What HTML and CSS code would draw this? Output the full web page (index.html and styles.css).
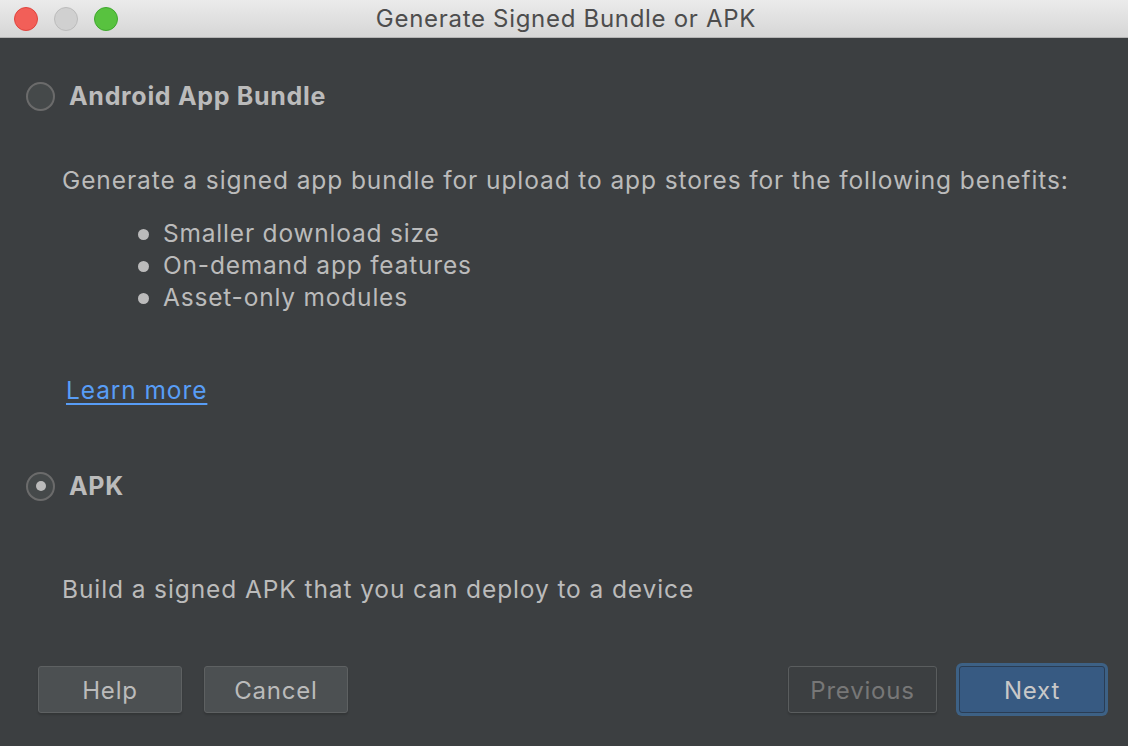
FILE: index.html
```html
<!DOCTYPE html>
<html>
<head>
<meta charset="utf-8">
<link rel="stylesheet" href="styles.css">
</head>
<body>
<div class="window">
  <div class="titlebar">
    <div class="lights">
      <span class="light red"></span>
      <span class="light gray"></span>
      <span class="light green"></span>
    </div>
    <div class="title">Generate Signed Bundle or APK</div>
  </div>
  <div class="content">
    <div class="option">
      <span class="radio"></span>
      <span class="opt-label">Android App Bundle</span>
    </div>
    <p class="desc first">Generate a signed app bundle for upload to app stores for the following benefits:</p>
    <ul class="benefits">
      <li>Smaller download size</li>
      <li>On-demand app features</li>
      <li>Asset-only modules</li>
    </ul>
    <a class="learn" href="#">Learn more</a>
    <div class="option apk">
      <span class="radio checked"></span>
      <span class="opt-label">APK</span>
    </div>
    <p class="desc second">Build a signed APK that you can deploy to a device</p>
  </div>
  <div class="footer">
    <div class="group">
      <button class="btn">Help</button>
      <button class="btn">Cancel</button>
    </div>
    <div class="group right">
      <button class="btn disabled">Previous</button>
      <button class="btn primary">Next</button>
    </div>
  </div>
</div>
</body>
</html>
```

FILE: styles.css
```css
* { box-sizing: border-box; }
html, body { margin: 0; padding: 0; }
body {
  width: 1128px;
  height: 746px;
  overflow: hidden;
  background: #3c3f41;
  font-family: "Inter", "Liberation Sans", sans-serif;
  color: #bbbbbb;
}
.window { width: 1128px; height: 746px; display: flex; flex-direction: column; }
.titlebar {
  height: 38px;
  background: linear-gradient(#ebebeb, #d6d6d6);
  border-bottom: 1px solid #b4b4b4;
  display: flex;
  align-items: center;
  position: relative;
}
.lights { display: flex; gap: 16px; padding-left: 14px; position: relative; z-index: 1; }
.light { width: 24px; height: 24px; border-radius: 50%; display: block; }
.red { background: #f25f58; border: 1px solid #e0443e; }
.gray { background: #d0d0d0; border: 1px solid #bcbcbc; }
.green { background: #58c23f; border: 1px solid #3fa82e; }
.title {
  position: absolute;
  left: 0; right: 0; top: 0; bottom: 0;
  display: flex; align-items: center; justify-content: center;
  font-size: 24px;
  letter-spacing: 0.7px;
  color: #4d4d4d;
  padding-left: 4px;
}
.content { flex: 1; padding: 44px 0 0 0; }
.option { display: flex; align-items: center; height: 28px; padding-left: 26px; }
.radio {
  width: 29px; height: 29px; border-radius: 50%;
  border: 2px solid #6b6b6b;
  background: #45494a;
  display: flex; align-items: center; justify-content: center;
  margin-right: 14px;
}
.radio.checked::after {
  content: ""; width: 10px; height: 10px; border-radius: 50%; background: #bbbbbb;
}
.opt-label { font-size: 25px; font-weight: 700; color: #bbbbbb; letter-spacing: 0.7px; }
.desc { margin: 0; font-size: 24.5px; letter-spacing: 0.9px; padding-left: 62px; }
.desc.first { margin-top: 55px; }
.benefits {
  margin: 22px 0 0 0;
  padding-left: 163px;
  font-size: 24.5px;
  letter-spacing: 0.8px;
  line-height: 32px;
  list-style: none;
}
.benefits li { position: relative; }
.benefits li::before {
  content: ""; position: absolute; left: -25px; top: 12px;
  width: 11px; height: 11px; border-radius: 50%; background: #bbbbbb;
}
.learn {
  display: inline-block;
  margin: 62px 0 0 66px;
  font-size: 24.5px;
  letter-spacing: 0.9px;
  color: #589df6;
  text-decoration: underline;
  text-underline-offset: 4px;
}
.option.apk { margin-top: 67px; }
.desc.second { margin-top: 74px; }
.footer {
  height: 116px;
  display: flex;
  justify-content: space-between;
  padding: 36px 23px 0 38px;
}
.group { display: flex; gap: 22px; align-items: flex-start; }
.group.right { gap: 22px; }
.btn {
  width: 144px; height: 47px;
  background: #4c5052;
  border: 1px solid #5e6162;
  border-radius: 3px;
  color: #bbbbbb;
  font-family: inherit;
  font-size: 24px;
  letter-spacing: 0.8px;
  padding-top: 3px;
  box-shadow: 0 2px 2px rgba(0,0,0,0.15);
}
.btn.disabled { width: 149px; background: #3c3f41; color: #777777; border-color: #5a5d5e; }
.btn.primary {
  width: 146px;
  background: #375a82;
  border: 1px solid #2a3d54;
  color: #c8c8c8;
  box-shadow: 0 0 0 3px #3d6185;
}
```
